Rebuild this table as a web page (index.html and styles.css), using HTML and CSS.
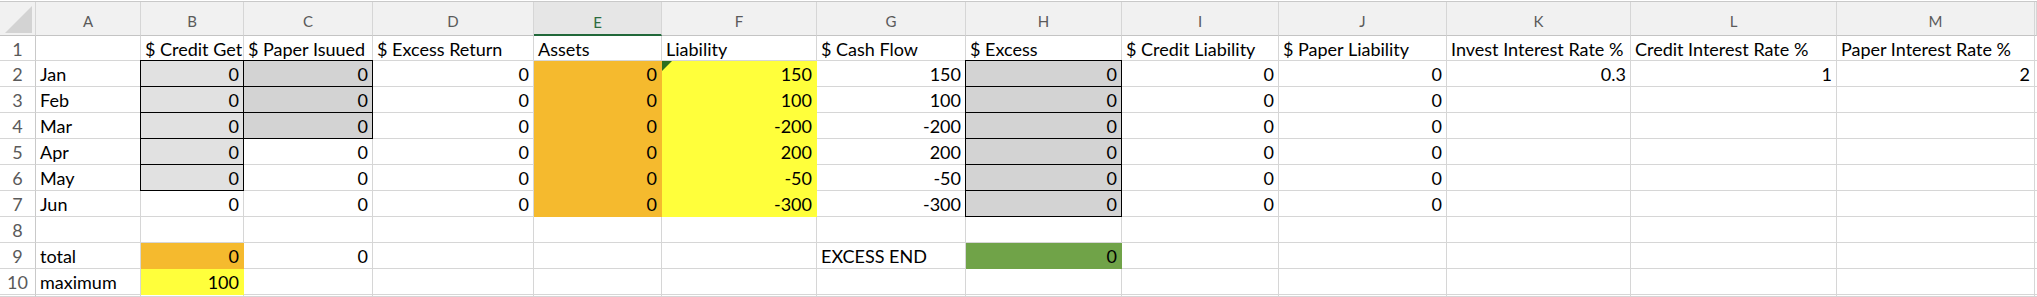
FILE: index.html
```html
<!DOCTYPE html>
<html>
<head>
<meta charset="utf-8">
<link rel="stylesheet" href="styles.css">
</head>
<body>
<div class="sheet">
  <div class="ch corner"><span class="tri"></span></div>
  <div class="ch">A</div><div class="ch">B</div><div class="ch">C</div><div class="ch">D</div>
  <div class="ch sel">E</div><div class="ch">F</div><div class="ch">G</div><div class="ch">H</div>
  <div class="ch">I</div><div class="ch">J</div><div class="ch">K</div><div class="ch">L</div>
  <div class="ch">M</div><div class="ch"></div>

  <div class="rh">1</div>
  <div class="c"></div><div class="c">$ Credit Get</div><div class="c">$ Paper Isuued</div><div class="c">$ Excess Return</div>
  <div class="c">Assets</div><div class="c">Liability</div><div class="c">$ Cash Flow</div><div class="c">$ Excess</div>
  <div class="c">$ Credit Liability</div><div class="c">$ Paper Liability</div><div class="c">Invest Interest Rate %</div>
  <div class="c">Credit Interest Rate %</div><div class="c">Paper Interest Rate %</div><div class="c"></div>

  <div class="rh">2</div>
  <div class="c">Jan</div><div class="c n inp">0</div><div class="c n inp2">0</div><div class="c n">0</div>
  <div class="c n orange">0</div><div class="c n yellow note">150</div><div class="c n">150</div><div class="c n inp2">0</div>
  <div class="c n">0</div><div class="c n">0</div><div class="c n">0.3</div><div class="c n">1</div><div class="c n">2</div><div class="c"></div>

  <div class="rh">3</div>
  <div class="c">Feb</div><div class="c n inp">0</div><div class="c n inp2">0</div><div class="c n">0</div>
  <div class="c n orange">0</div><div class="c n yellow">100</div><div class="c n">100</div><div class="c n inp2">0</div>
  <div class="c n">0</div><div class="c n">0</div><div class="c"></div><div class="c"></div><div class="c"></div><div class="c"></div>

  <div class="rh">4</div>
  <div class="c">Mar</div><div class="c n inp">0</div><div class="c n inp2">0</div><div class="c n">0</div>
  <div class="c n orange">0</div><div class="c n yellow">-200</div><div class="c n">-200</div><div class="c n inp2">0</div>
  <div class="c n">0</div><div class="c n">0</div><div class="c"></div><div class="c"></div><div class="c"></div><div class="c"></div>

  <div class="rh">5</div>
  <div class="c">Apr</div><div class="c n inp">0</div><div class="c n">0</div><div class="c n">0</div>
  <div class="c n orange">0</div><div class="c n yellow">200</div><div class="c n">200</div><div class="c n inp2">0</div>
  <div class="c n">0</div><div class="c n">0</div><div class="c"></div><div class="c"></div><div class="c"></div><div class="c"></div>

  <div class="rh">6</div>
  <div class="c">May</div><div class="c n inp">0</div><div class="c n">0</div><div class="c n">0</div>
  <div class="c n orange">0</div><div class="c n yellow">-50</div><div class="c n">-50</div><div class="c n inp2">0</div>
  <div class="c n">0</div><div class="c n">0</div><div class="c"></div><div class="c"></div><div class="c"></div><div class="c"></div>

  <div class="rh">7</div>
  <div class="c">Jun</div><div class="c n">0</div><div class="c n">0</div><div class="c n">0</div>
  <div class="c n orange">0</div><div class="c n yellow">-300</div><div class="c n">-300</div><div class="c n inp2">0</div>
  <div class="c n">0</div><div class="c n">0</div><div class="c"></div><div class="c"></div><div class="c"></div><div class="c"></div>

  <div class="rh">8</div>
  <div class="c"></div><div class="c"></div><div class="c"></div><div class="c"></div>
  <div class="c"></div><div class="c"></div><div class="c"></div><div class="c"></div>
  <div class="c"></div><div class="c"></div><div class="c"></div><div class="c"></div><div class="c"></div><div class="c"></div>

  <div class="rh">9</div>
  <div class="c">total</div><div class="c n orange">0</div><div class="c n">0</div><div class="c"></div>
  <div class="c"></div><div class="c"></div><div class="c">EXCESS END</div><div class="c n green">0</div>
  <div class="c"></div><div class="c"></div><div class="c"></div><div class="c"></div><div class="c"></div><div class="c"></div>

  <div class="rh">10</div>
  <div class="c">maximum</div><div class="c n yellow">100</div><div class="c"></div><div class="c"></div>
  <div class="c"></div><div class="c"></div><div class="c"></div><div class="c"></div>
  <div class="c"></div><div class="c"></div><div class="c"></div><div class="c"></div><div class="c"></div><div class="c"></div>

  <div class="rh"></div>
  <div class="c"></div><div class="c"></div><div class="c"></div><div class="c"></div>
  <div class="c"></div><div class="c"></div><div class="c"></div><div class="c"></div>
  <div class="c"></div><div class="c"></div><div class="c"></div><div class="c"></div><div class="c"></div><div class="c"></div>
</div>
</body>
</html>
```
FILE: styles.css
```css
html, body {
  margin: 0;
  padding: 0;
  background: #ffffff;
  overflow: hidden;
}
body {
  width: 2037px;
  height: 297px;
}
.sheet {
  margin-top: 1px;
  border-top: 1px solid #c9c9c9;
  display: grid;
  grid-template-columns: 36px 105px 103px 129px 161px 128px 155px 149px 156px 157px 168px 184px 206px 198px 2px;
  grid-template-rows: 34px 25px repeat(9, 26px) 2px;
  font-family: "Lato", "Liberation Sans", sans-serif;
  font-size: 18px;
  color: #000;
}
.ch {
  box-sizing: border-box;
  background: #f1f1f1;
  border-right: 1px solid #d6d6d6;
  border-bottom: 1px solid #c4c4c4;
  color: #5a5a5a;
  font-size: 15px;
  display: flex;
  align-items: center;
  justify-content: center;
  padding-top: 5px;
}
.ch.sel {
  background: #e6e6e6;
  color: #2c6b3f;
  border-bottom: 2px solid #21683a;
  padding-top: 7px;
}
.corner {
  position: relative;
  background: #f1f1f1;
  padding: 0;
}
.tri {
  position: absolute;
  right: 3px;
  bottom: 2px;
  width: 0;
  height: 0;
  border-left: 27px solid transparent;
  border-bottom: 27px solid #d3d3d3;
}
.rh {
  box-sizing: border-box;
  background: #ffffff;
  border-right: 1px solid #c9c9c9;
  border-bottom: 1px solid #d6d6d6;
  color: #5a5a5a;
  font-size: 18px;
  display: flex;
  align-items: center;
  justify-content: center;
  padding-top: 1px;
}
.c {
  box-sizing: border-box;
  border-right: 1px solid #d6d6d6;
  border-bottom: 1px solid #d6d6d6;
  display: flex;
  align-items: center;
  padding: 1px 4px 0 4px;
  white-space: nowrap;
  overflow: visible;
  position: relative;
}
.n {
  justify-content: flex-end;
}
.orange {
  background: #f5ba2e;
  border-color: #f5ba2e;
}
.yellow {
  background: #ffff3b;
  border-color: #ffff3b;
}
.green {
  background: #70a348;
  border-color: #70a348;
}
.inp {
  background: #e1e1e1;
  border-color: #000;
  box-shadow: -1px 0 0 0 #000, 0 -1px 0 0 #000, -1px -1px 0 0 #000;
}
.inp2 {
  background: #d3d3d3;
  border-color: #000;
  box-shadow: -1px 0 0 0 #000, 0 -1px 0 0 #000, -1px -1px 0 0 #000;
}
.note::before {
  content: "";
  position: absolute;
  left: 0;
  top: 0;
  width: 0;
  height: 0;
  border-top: 10px solid #2b6e1f;
  border-right: 10px solid transparent;
}
```
